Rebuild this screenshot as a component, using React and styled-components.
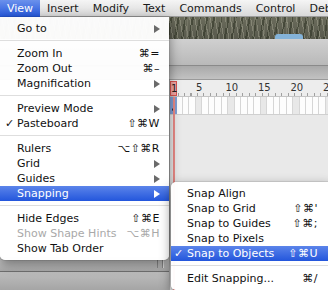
import React from 'react';
import styled, { createGlobalStyle } from 'styled-components';

const FW = 6.5;

const GlobalStyle = createGlobalStyle`
  html, body {
    margin: 0;
    padding: 0;
    overflow: hidden;
    background: #e8e8e8;
  }
`;

const Screen = styled.div`
  position: relative;
  width: 328px;
  height: 290px;
  overflow: hidden;
  display: flex;
  flex-direction: column;
  font-family: "DejaVu Sans", "Liberation Sans", sans-serif;
  color: #111;
`;

const MenuBar = styled.div`
  height: 16px;
  flex: none;
  display: flex;
  align-items: stretch;
  background: linear-gradient(#f5f5f5, #d9d9d9);
  border-bottom: 1px solid #9c9c9c;
  font-size: 11px;
  position: relative;
  z-index: 3;
`;

const BarTitle = styled.div`
  display: flex;
  align-items: center;
  padding: 0 7px;
  height: ${p => (p.$active ? '17px' : '16px')};
  color: ${p => (p.$active ? '#fff' : '#1a1a1a')};
  background: ${p => (p.$active ? 'linear-gradient(#6b91ec, #2457dc)' : 'none')};
`;

const Wallpaper = styled.div`
  height: 22px;
  flex: none;
  display: flex;
  align-items: flex-end;
  justify-content: flex-end;
  padding-right: 25px;
  background:
    repeating-linear-gradient(80deg, rgba(190, 190, 170, 0.35) 0 1px, transparent 1px 5px),
    repeating-linear-gradient(100deg, rgba(40, 45, 30, 0.5) 0 2px, transparent 2px 7px),
    repeating-linear-gradient(95deg, rgba(150, 150, 130, 0.3) 0 1px, transparent 1px 11px),
    linear-gradient(#6b6c5c, #58594c);
`;

const Blob = styled.span`
  width: 28px;
  height: 5px;
  border-radius: 3px 3px 0 0;
  background: #84b3d9;
`;

const Toolbar = styled.div`
  height: 26px;
  flex: none;
  background: linear-gradient(#d0d0d0, #b9b9b9);
  border-bottom: 1px solid #8a8a8a;
`;

const SubToolbar = styled.div`
  height: 13px;
  flex: none;
  background: linear-gradient(#a9a9a9, #c2c2c2);
  border-bottom: 1px solid #9a9a9a;
`;

const Panels = styled.div`
  flex: 1;
  display: flex;
  min-height: 0;
`;

const LayerColumn = styled.div`
  width: 170px;
  flex: none;
  display: flex;
  flex-direction: column;
  border-right: 1px solid #a8a8a8;
  box-sizing: border-box;
`;

const LayerList = styled.div`
  height: 177px;
  background: #f4f4f4;
`;

const LayerFooter = styled.div`
  height: 14px;
  display: flex;
  align-items: center;
  justify-content: flex-end;
  padding-right: 6px;
  background: linear-gradient(#d2d2d2, #a9a9a9);
  border-bottom: 1px solid #6f6f6f;
`;

const Grip = styled.span`
  width: 4px;
  height: 8px;
  border-left: 1px solid #8a8a8a;
  border-right: 1px solid #8a8a8a;
  box-shadow: 1px 0 0 #e2e2e2;
`;

const StageStrip = styled.div`
  flex: 1;
  background: linear-gradient(#bdbdbd, #a5a5a5);
`;

const Timeline = styled.div`
  flex: 1;
  position: relative;
  display: flex;
  flex-direction: column;
  background: #e9e9e9;
`;

const Ruler = styled.div`
  height: 17px;
  position: relative;
  background:
    repeating-linear-gradient(90deg, #a0a0a0 0 1px, transparent 1px ${FW}px) 1px 100% / 100% 3px no-repeat,
    #ededed;
  border-bottom: 1px solid #c4c4c4;
  box-sizing: border-box;
`;

const RulerNum = styled.span`
  position: absolute;
  top: 2px;
  transform: translateX(-50%);
  font-size: 10px;
  color: #333;
`;

const PlayHead = styled.div`
  position: absolute;
  left: 0;
  top: 1px;
  width: 7px;
  height: 15px;
  box-sizing: border-box;
  border: 1px solid #d9534f;
  background: #f2a6a2;
  font-size: 10px;
  color: #222;
  text-align: center;
  line-height: 13px;
  z-index: 1;
`;

const PlayLine = styled.div`
  position: absolute;
  left: 3px;
  top: 17px;
  bottom: 0;
  width: 2px;
  background: #ea8a86;
  z-index: 1;
`;

const FrameRow = styled.div`
  height: 18px;
  box-sizing: border-box;
  border-bottom: 1px solid #d0d0d0;
  background:
    repeating-linear-gradient(90deg, transparent 0 ${FW - 1}px, #d6d6d6 ${FW - 1}px ${FW}px),
    repeating-linear-gradient(90deg, #fdfdfd 0 ${FW * 4}px, #e8e8e8 ${FW * 4}px ${FW * 5}px);
  display: flex;
`;

const KeyFrame = styled.div`
  width: 7px;
  height: 100%;
  background: #7f9ed3;
  display: flex;
  align-items: flex-end;
  justify-content: center;
  padding-bottom: 3px;
  box-sizing: border-box;
`;

const Dot = styled.span`
  width: 3px;
  height: 3px;
  border-radius: 50%;
  background: #1d2a44;
`;

const Menu = styled.div`
  position: absolute;
  left: ${p => p.$left}px;
  top: ${p => p.$top}px;
  width: ${p => p.$width}px;
  padding: 4px 0;
  background: rgba(255, 255, 255, 0.97);
  border-radius: ${p => (p.$sub ? '5px' : '0 0 5px 5px')};
  box-shadow: 0 4px 12px rgba(0, 0, 0, 0.45), 0 0 0 1px rgba(0, 0, 0, 0.08);
  font-size: 11px;
  z-index: ${p => (p.$sub ? 5 : 4)};
`;

const Item = styled.div`
  position: relative;
  height: 15px;
  display: flex;
  align-items: center;
  padding: 0 ${p => p.$padRight}px 0 ${p => p.$padLeft}px;
  color: ${p => (p.$selected ? '#fff' : p.$disabled ? '#a9a9a9' : '#111')};
  background: ${p => (p.$selected ? 'linear-gradient(#5b84ea, #2356dc)' : 'none')};
`;

const Check = styled.span`
  position: absolute;
  left: ${p => p.$left}px;
  font-size: 11px;
`;

const Label = styled.span`
  flex: 1;
  white-space: nowrap;
`;

const Shortcut = styled.span`
  white-space: nowrap;
  letter-spacing: 0.5px;
`;

const Arrow = styled.span`
  width: 0;
  height: 0;
  border-top: 4px solid transparent;
  border-bottom: 4px solid transparent;
  border-left: 6px solid ${p => (p.$selected ? '#fff' : '#6a6a6a')};
`;

const Separator = styled.div`
  height: 1px;
  margin: 4px 0 5px;
  background: #dedede;
`;

const barTitles = ['View', 'Insert', 'Modify', 'Text', 'Commands', 'Control', 'Debug'];

const viewItems = [
  { label: 'Go to', arrow: true },
  { sep: true },
  { label: 'Zoom In', key: '⌘=' },
  { label: 'Zoom Out', key: '⌘–' },
  { label: 'Magnification', arrow: true },
  { sep: true },
  { label: 'Preview Mode', arrow: true },
  { label: 'Pasteboard', key: '⇧⌘W', checked: true },
  { sep: true },
  { label: 'Rulers', key: '⌥⇧⌘R' },
  { label: 'Grid', arrow: true },
  { label: 'Guides', arrow: true },
  { label: 'Snapping', arrow: true, selected: true },
  { sep: true },
  { label: 'Hide Edges', key: '⇧⌘E' },
  { label: 'Show Shape Hints', key: '⌥⌘H', disabled: true },
  { label: 'Show Tab Order' },
];

const snapItems = [
  { label: 'Snap Align' },
  { label: 'Snap to Grid', key: "⇧⌘'" },
  { label: 'Snap to Guides', key: '⇧⌘;' },
  { label: 'Snap to Pixels' },
  { label: 'Snap to Objects', key: '⇧⌘U', checked: true, selected: true },
  { sep: true },
  { label: 'Edit Snapping...', key: '⌘/' },
];

const MenuList = ({ items, padLeft, padRight, checkLeft }) =>
  items.map((it, i) =>
    it.sep ? (
      <Separator key={i} />
    ) : (
      <Item
        key={i}
        $padLeft={padLeft}
        $padRight={padRight}
        $selected={it.selected}
        $disabled={it.disabled}
      >
        {it.checked && <Check $left={checkLeft}>✓</Check>}
        <Label>{it.label}</Label>
        {it.key && <Shortcut>{it.key}</Shortcut>}
        {it.arrow && <Arrow $selected={it.selected} />}
      </Item>
    ),
  );

const rulerMarks = [5, 10, 15, 20, 25];

const App = () => (
  <Screen>
    <GlobalStyle />
    <MenuBar>
      {barTitles.map((t, i) => (
        <BarTitle key={t} $active={i === 0}>
          {t}
        </BarTitle>
      ))}
    </MenuBar>
    <Wallpaper>
      <Blob />
    </Wallpaper>
    <Toolbar />
    <SubToolbar />
    <Panels>
      <LayerColumn>
        <LayerList />
        <LayerFooter>
          <Grip />
        </LayerFooter>
        <StageStrip />
      </LayerColumn>
      <Timeline>
        <Ruler>
          <PlayHead>1</PlayHead>
          {rulerMarks.map(n => (
            <RulerNum key={n} style={{ left: (n - 1) * FW + FW / 2 }}>
              {n}
            </RulerNum>
          ))}
        </Ruler>
        <FrameRow>
          <KeyFrame>
            <Dot />
          </KeyFrame>
        </FrameRow>
        <PlayLine />
      </Timeline>
    </Panels>

    <Menu $left={0} $top={17} $width={169}>
      <MenuList items={viewItems} padLeft={17} padRight={9} checkLeft={5} />
    </Menu>
    <Menu $sub $left={171} $top={182} $width={162}>
      <MenuList items={snapItems} padLeft={16} padRight={15} checkLeft={3} />
    </Menu>
  </Screen>
);

export default App;
